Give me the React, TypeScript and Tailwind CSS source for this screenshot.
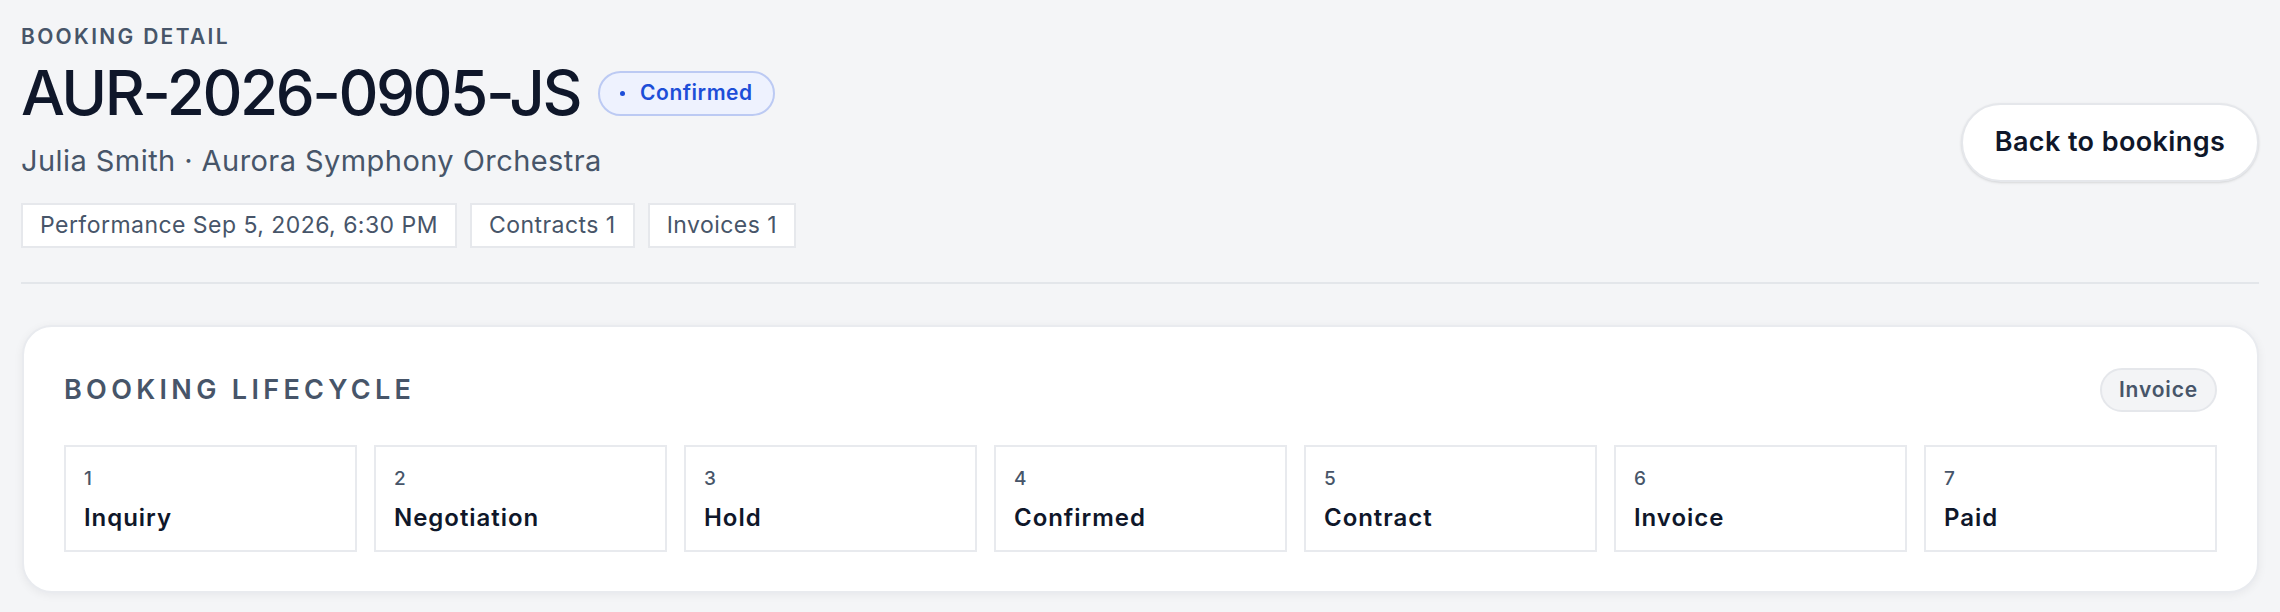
import React from "react";

const steps = ["Inquiry", "Negotiation", "Hold", "Confirmed", "Contract", "Invoice", "Paid"];

export default function App() {
    return (
        <div className="min-h-screen w-full bg-[#f4f5f7] px-[21px] pt-[22px] font-['Inter',sans-serif]">
            <div className="flex flex-row items-start justify-between">
                <div className="flex flex-col">
                    <p className="text-[21px] leading-[30px] font-semibold tracking-[0.11em] text-[#475569]">BOOKING DETAIL</p>
                    <div className="flex flex-row items-center gap-[18px] mt-[10px]">
                        <h1 className="text-[62px] leading-[62px] font-medium tracking-[-0.04em] text-[#0f172a]">AUR-2026-0905-JS</h1>
                        <span className="h-[45px] px-[20px] flex items-center gap-[15px] rounded-full border-2 border-[#bccaf3] bg-[#eef2fe] text-[21px] font-semibold tracking-[0.025em] text-[#1d4ed8]">
                            <span className="w-[5px] h-[5px] rounded-full bg-[#1d4ed8]"></span>
                            Confirmed
                        </span>
                    </div>
                    <p className="text-[29px] leading-[40px] tracking-[0.015em] text-[#475569] mt-[17px]">Julia Smith · Aurora Symphony Orchestra</p>
                    <div className="flex flex-row gap-[13px] mt-[22px]">
                        {["Performance Sep 5, 2026, 6:30 PM", "Contracts 1", "Invoices 1"].map((c) => (
                            <span key={c} className="h-[45px] px-[17px] flex items-center bg-white border-2 border-[#e6e8ec] text-[23px] tracking-[0.02em] text-[#475569]">
                                {c}
                            </span>
                        ))}
                    </div>
                </div>
                <button className="mt-[81px] h-[79px] w-[298px] rounded-full bg-white border-2 border-[#e5e7eb] shadow-sm text-[27px] font-semibold tracking-[0.015em] text-[#0f172a]">
                    Back to bookings
                </button>
            </div>
            <div className="h-[2px] bg-[#e3e6ea] mt-[34px]"></div>
            <div className="mt-[41px] ml-[1px] bg-white rounded-[30px] border-2 border-[#e9ebef] shadow-[0_2px_10px_rgba(15,23,42,0.06)] px-[40px] pt-[41px] pb-[39px]">
                <div className="flex flex-row items-center justify-between h-[44px]">
                    <h2 className="text-[27px] font-semibold tracking-[0.16em] text-[#475569]">BOOKING LIFECYCLE</h2>
                    <span className="h-[44px] px-[17px] flex items-center rounded-full bg-[#f3f4f6] border-2 border-[#e5e7eb] text-[21px] font-semibold tracking-[0.04em] text-[#475569]">
                        Invoice
                    </span>
                </div>
                <div className="grid grid-cols-7 gap-[17px] mt-[33px]">
                    {steps.map((s, i) => (
                        <div key={s} className="h-[107px] border-2 border-[#e8eaee] px-[18px] pt-[18px]">
                            <p className="text-[19px] leading-[27px] font-medium tracking-[0.02em] text-[#475569]">{i + 1}</p>
                            <p className="text-[24px] leading-[32px] font-semibold tracking-[0.04em] text-[#0f172a] mt-[10px]">{s}</p>
                        </div>
                    ))}
                </div>
            </div>
        </div>
    );
}
